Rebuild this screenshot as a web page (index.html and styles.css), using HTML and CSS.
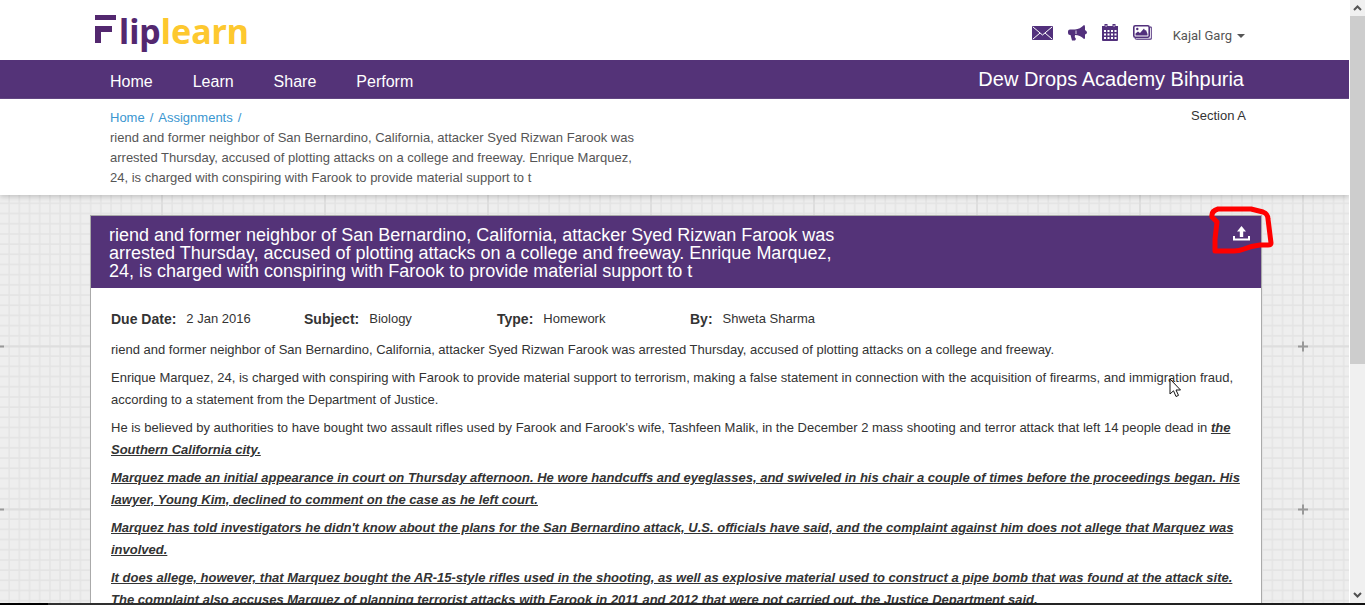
FILE: index.html
```html
<!DOCTYPE html>
<html lang="en">
<head>
<meta charset="utf-8">
<title>Fliplearn - Assignments</title>
<link rel="stylesheet" href="styles.css">
</head>
<body>
<div class="window">
  <div class="page">
    <header class="topbar">
      <a class="logo" href="#" aria-label="Fliplearn">
        <svg class="logo-mark" width="22" height="28" viewBox="0 0 22 28" aria-hidden="true">
          <path fill="#53286f" d="M0 0H21V5H0ZM0 11H17V17H6V28H0Z"/>
        </svg>
        <span class="logo-flip">lip</span><span class="logo-learn">learn</span>
      </a>
      <div class="tools">
        <button class="tool" type="button" aria-label="Messages">
          <svg width="21" height="14" viewBox="0 0 21 14"><rect width="21" height="14" rx="1" fill="#52307c"/><path d="M1 1L10.500 9L20 1M1 13L8 7M20 13L13 7" fill="none" stroke="#fff" stroke-width="1"/></svg>
        </button>
        <button class="tool" type="button" aria-label="Announcements">
          <svg width="19" height="16" viewBox="0 0 19 16" fill="#52307c"><path d="M16 0Q17 0 17 2V5Q19 6 19 7.500Q19 9 17 9.500V13Q17 14 16 14Q12 10 7 10Q6 12 8 14L7 15.500H4L2.500 10H2Q0 10 0 8V6.500Q0 4.500 2 4.500H7Q12 4 16 0Z"/><path d="M8 5.500V9" stroke="#fff" stroke-width=".8"/></svg>
        </button>
        <button class="tool" type="button" aria-label="Calendar">
          <svg width="16" height="17" viewBox="0 0 16 17"><path fill="#52307c" d="M0 2H16V16Q16 17 15 17H1Q0 17 0 16ZM2.500 0H5.500V4H2.500ZM10.500 0H13.500V4H10.500Z"/><path fill="#fff" d="M2 6H4V8H2ZM5.500 6H7.500V8H5.500ZM9 6H11V8H9ZM12.500 6H14.500V8H12.500ZM2 9.500H4V11.500H2ZM5.500 9.500H7.500V11.500H5.500ZM9 9.500H11V11.500H9ZM12.500 9.500H14.500V11.500H12.500ZM2 13H4V15H2ZM5.500 13H7.500V15H5.500ZM9 13H11V15H9ZM12.500 13H14.500V15H12.500ZM3.700 1H4.400V3H3.700ZM11.700 1H12.400V3H11.700Z"/></svg>
        </button>
        <button class="tool" type="button" aria-label="Gallery">
          <svg width="19" height="15" viewBox="0 0 19 15"><path d="M17 2Q18.500 2 18.500 3.500V12.500Q18.500 14.300 17 14.300H4Q2.500 14.300 2 13" fill="none" stroke="#755b98" stroke-width="1.400"/><rect x=".8" y=".8" width="15.400" height="11.400" rx="1.500" fill="#fff" stroke="#52307c" stroke-width="1.600"/><path fill="#52307c" d="M2.500 10.500V8.500L5 6.500L7 8L11 3.500L12 5.500L13 5L14.500 9V10.500Z"/><circle cx="4.300" cy="4" r="1.200" fill="#52307c"/></svg>
        </button>
        <button class="user" type="button">Kajal Garg <span class="caret"></span></button>
      </div>
    </header>

    <nav class="nav">
      <div class="nav-links">
        <a href="#">Home</a><a href="#">Learn</a><a href="#">Share</a><a href="#">Perform</a>
      </div>
      <div class="school">Dew Drops Academy Bihpuria</div>
    </nav>

    <section class="crumbs">
      <div class="crumb-text">
        <div class="crumb-links"><a href="#">Home</a><span>/</span><a href="#">Assignments</a><span>/</span></div>
        <div>riend and former neighbor of San Bernardino, California, attacker Syed Rizwan Farook was<br>arrested Thursday, accused of plotting attacks on a college and freeway. Enrique Marquez,<br>24, is charged with conspiring with Farook to provide material support to t</div>
      </div>
      <div class="section-name">Section A</div>
    </section>

    <main class="backdrop">
      <svg class="grid" aria-hidden="true">
        <defs>
          <pattern id="cell" width="10.1875" height="10.1875" patternUnits="userSpaceOnUse" x="-2" y="-13">
            <path d="M0 1H10.200M1 0V10.200" stroke="#e4e4e4" stroke-width="1.500"/>
          </pattern>
          <pattern id="block" width="163" height="163" patternUnits="userSpaceOnUse" x="-83" y="70">
            <path d="M0 81.500H163M82 0V163" stroke="#dedede" stroke-width="2"/>
            <path d="M77 81.500H87M82 76.500V86.500" stroke="#999" stroke-width="2"/>
          </pattern>
        </defs>
        <rect width="100%" height="100%" fill="url(#cell)"/>
        <rect width="100%" height="100%" fill="url(#block)"/>
      </svg>
      <article class="card">
        <header class="card-head">
          <h1>riend and former neighbor of San Bernardino, California, attacker Syed Rizwan Farook was<br>arrested Thursday, accused of plotting attacks on a college and freeway. Enrique Marquez,<br>24, is charged with conspiring with Farook to provide material support to t</h1>
          <button class="upload" type="button" aria-label="Upload">
            <svg width="17" height="15" viewBox="0 0 17 15" fill="#fff"><path d="M8.500 0L13 5.500H10.200V11H6.800V5.500H4ZM0 10H2V12.500H15V10H17V14.500H0Z"/></svg>
          </button>
          <svg class="marker" width="66" height="52" viewBox="0 0 66 52" aria-hidden="true"><path d="M5 14L3 12Q2 6 9 4H42L54 7Q59 9 59 14L62 38Q62 40 59 40H51Q42 41 35 44Q30 46 25 46H6V34L8 17L5 14" fill="none" stroke="#f00" stroke-width="5" stroke-linejoin="round"/></svg>
        </header>
        <div class="card-body">
          <dl class="meta">
            <div><dt>Due Date:</dt><dd>2 Jan 2016</dd></div>
            <div><dt>Subject:</dt><dd>Biology</dd></div>
            <div><dt>Type:</dt><dd>Homework</dd></div>
            <div><dt>By:</dt><dd>Shweta Sharma</dd></div>
          </dl>
          <p>riend and former neighbor of San Bernardino, California, attacker Syed Rizwan Farook was arrested Thursday, accused of plotting attacks on a college and freeway.</p>
          <p>Enrique Marquez, 24, is charged with conspiring with Farook to provide material support to terrorism, making a false statement in connection with the acquisition of firearms, and immigration fraud,<br>according to a statement from the Department of Justice.</p>
          <p>He is believed by authorities to have bought two assault rifles used by Farook and Farook's wife, Tashfeen Malik, in the December 2 mass shooting and terror attack that left 14 people dead in <strong>the<br>Southern California city.</strong></p>
          <p><strong>Marquez made an initial appearance in court on Thursday afternoon. He wore handcuffs and eyeglasses, and swiveled in his chair a couple of times before the proceedings began. His<br>lawyer, Young Kim, declined to comment on the case as he left court.</strong></p>
          <p><strong>Marquez has told investigators he didn't know about the plans for the San Bernardino attack, U.S. officials have said, and the complaint against him does not allege that Marquez was<br>involved.</strong></p>
          <p><strong>It does allege, however, that Marquez bought the AR-15-style rifles used in the shooting, as well as explosive material used to construct a pipe bomb that was found at the attack site.<br>The complaint also accuses Marquez of planning terrorist attacks with Farook in 2011 and 2012 that were not carried out, the Justice Department said.</strong></p>
        </div>
      </article>
    </main>
  </div>
  <div class="scrollbar" aria-hidden="true">
    <svg width="15" height="16" viewBox="0 0 15 16"><path d="M4 10L7.500 6.500L11 10" fill="none" stroke="#555" stroke-width="2"/></svg>
    <div class="track"><div class="thumb"></div></div>
    <svg width="15" height="16" viewBox="0 0 15 16"><path d="M4 6L7.500 9.500L11 6" fill="none" stroke="#505050" stroke-width="2"/></svg>
  </div>
</div>
<div class="taskbar-edge"></div>
<svg class="cursor" width="13" height="20" viewBox="0 0 13 20" aria-hidden="true"><path d="M1 1V16L4.500 12.800L7 18.500L9.500 17.400L7 12H11.500Z" fill="#fff" stroke="#111"/></svg>
</body>
</html>
```
FILE: styles.css
```css
* { box-sizing: border-box; }
body {
  margin: 0;
  height: 100vh;
  display: flex;
  flex-direction: column;
  overflow: hidden;
  position: relative;
  font: 13px/20px "Liberation Sans", Arial, sans-serif;
  color: #333;
  background: #fff;
}
a { color: inherit; text-decoration: none; }
button { border: 0; padding: 0; background: none; font: inherit; color: inherit; cursor: pointer; }
svg { display: block; }

.window { flex: 1; min-height: 0; display: flex; gap: 1px; }
.page { flex: 1; min-width: 0; display: flex; flex-direction: column; overflow: hidden; }

.topbar {
  flex: none;
  height: 60px;
  padding: 0 104px 0 95px;
  display: flex;
  justify-content: space-between;
}
.logo {
  display: flex;
  align-items: flex-start;
  padding-top: 15px;
  font: bold 37px/32px "Noto Sans", sans-serif;
  font-size: 34px;
}
.logo-mark { margin-right: 2px; }
.logo-flip { color: #53286f; }
.logo-learn { color: #fdc82f; }
.tools { display: flex; align-items: center; gap: 15px; padding-top: 5px; }
.user {
  display: flex;
  align-items: center;
  gap: 5px;
  padding: 6px 0 0 6px;
  font: 13px/20px Roboto, sans-serif;
  color: #555;
}
.caret { border: 4px solid transparent; border-top-color: #555; border-bottom: 0; }

.nav {
  flex: none;
  height: 39px;
  padding: 0 105px 0 110px;
  display: flex;
  justify-content: space-between;
  background: #543378;
  border-bottom: 1px solid #654886;
  color: #fff;
}
.nav-links { display: flex; gap: 40px; font-size: 16px; line-height: 44px; }
.school { font-size: 20px; line-height: 38px; }

.crumbs {
  flex: none;
  position: relative;
  z-index: 1;
  display: flex;
  justify-content: space-between;
  padding: 9px 103px 6px 110px;
  min-height: 96px;
  background: #fff;
  box-shadow: 0 2px 5px rgba(0, 0, 0, .18);
  color: #555;
}
.crumb-links { display: flex; gap: 5px; color: #3a96d0; }
.section-name { line-height: 16px; color: #333; }

.backdrop {
  flex: 1;
  min-height: 0;
  position: relative;
  background: #eee;
  padding: 20px 87px 0 90px;
}
.grid { position: absolute; inset: 0; width: 100%; height: 100%; }
.card {
  position: relative;
  background: #fff;
  border: 1px solid #aaa;
}
.card-head {
  position: relative;
  display: flex;
  justify-content: space-between;
  align-items: flex-start;
  padding: 10px 11px 8px 18px;
  background: #543378;
  color: #fff;
}
.card-head h1 { margin: 0; font-size: 18px; line-height: 18px; font-weight: normal; }
.marker { position: absolute; right: -14px; top: -11px; }
.card-body { padding: 20px 20px 0; line-height: 22px; }
.meta { display: flex; margin: 0 0 9px; line-height: 22px; }
.meta div { display: flex; gap: 10px; width: 193px; }
.meta dt { font-size: 14px; font-weight: bold; }
.meta dd { margin: 0; }
.card-body p { margin: 0 0 6px; white-space: nowrap; }
.card-body strong { font-style: italic; text-decoration: underline; }

.scrollbar { width: 15px; flex: none; display: flex; flex-direction: column; background: #f0f0f0; }
.track { flex: 1; }
.thumb { height: 61%; background: #cdcdcd; }
.taskbar-edge { flex: none; height: 2px; background: linear-gradient(90deg, #000 48px, #303030 48px, #222 90%, #111); }
.cursor { position: absolute; left: 1169px; top: 378px; }
```
